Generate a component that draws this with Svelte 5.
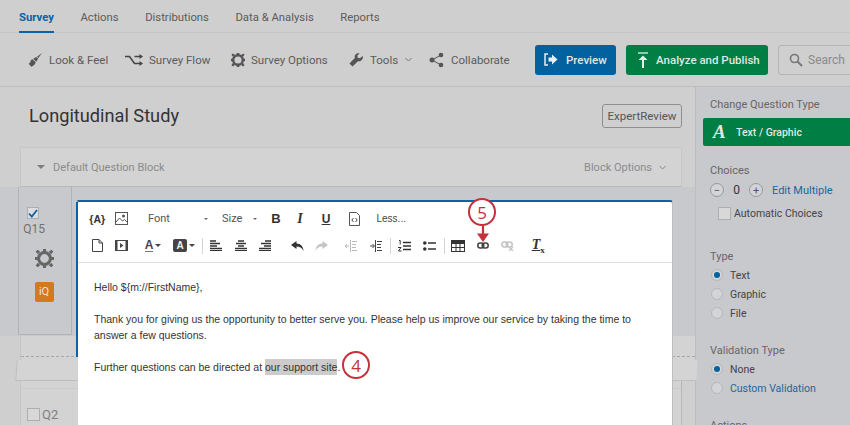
<script>
	const tabs = ['Survey', 'Actions', 'Distributions', 'Data & Analysis', 'Reports'];
</script>

<div class="page">
	<nav class="tabs">
		{#each tabs as tab, i}
			<span class="tab" class:active={i === 0}>{tab}</span>
		{/each}
	</nav>

	<div class="toolbar">
		<span class="tool t1">
			<svg width="15" height="15" viewBox="0 0 16 16"><path d="M15 1 9.500 5 11 6.500zM8.700 5.200 5.600 7.200 8.800 10.400 10.800 7.300zM4.800 7.800C3.500 8 3 9 2.600 10.400 2.300 11.500 1.600 12 .6 12.300L3.400 15.600C6 15 7.600 13.300 8.200 11z" fill="#555"/></svg>
			Look &amp; Feel
		</span>
		<span class="tool t2">
			<svg width="18" height="12" viewBox="0 0 18 12"><path d="M0 2.500h4.500L9.500 9.500H15M9.500 2.500H15" fill="none" stroke="#444" stroke-width="1.600"/><path d="M14.500 0 18 2.500 14.500 5zM14.500 7 18 9.500 14.500 12z" fill="#444"/></svg>
			Survey Flow
		</span>
		<span class="tool t3">
			<svg width="14" height="14" viewBox="0 0 16 16"><path d="M8 2.500a5.500 5.500 0 1 0 0 11 5.500 5.500 0 0 0 0-11z" fill="none" stroke="#555" stroke-width="2.800"/><path d="M6.500 0h3v3h-3zM6.500 13h3v3h-3zM0 6.500h3v3H0zM13 6.500h3v3h-3zM2 .5 4.500 2 2.500 4.500 .5 2zM14 11.500 15.500 14 13.500 15.500 11.500 13.500zM14 .5 15.500 2 13.500 4.500 11.500 2.500zM2 11.500 4.500 13.500 2.500 15.500 .5 14z" fill="#555"/></svg>
			Survey Options
		</span>
		<span class="tool t4">
			<svg width="14" height="14" viewBox="0 0 16 16"><path d="M11 0a4.500 4.500 0 0 0-4.300 5.800L.5 12l3.500 3.500 6.200-6.200A4.500 4.500 0 0 0 15.600 3.500L12.500 6 10 5.500 9.500 3 12 .2A4.500 4.500 0 0 0 11 0z" fill="#555"/></svg>
			Tools
			<svg class="chev" width="7" height="5" viewBox="0 0 7 5"><path d="M.5 1 3.500 4 6.500 1" fill="none" stroke="#777"/></svg>
		</span>
		<span class="tool t5">
			<svg width="15" height="16" viewBox="0 0 15 16"><path d="M3 8 12 3M3 8l9 5" stroke="#555"/><circle cx="3" cy="8" r="2.500" fill="#555"/><circle cx="12" cy="3" r="2.300" fill="#555"/><circle cx="12" cy="13" r="2.300" fill="#555"/></svg>
			Collaborate
		</span>
		<button class="btn preview">
			<svg width="14" height="13" viewBox="0 0 14 13"><path d="M4 1H1v11h3" fill="none" stroke="#e6eef4" stroke-width="1.500"/><path d="M4.500 4.500H8V1.500L13.500 6.500 8 11.500V8.500H4.500z" fill="#e6eef4"/></svg>
			Preview
		</button>
		<button class="btn publish">
			<svg width="12" height="16" viewBox="0 0 12 16"><path d="M1 1h10" stroke="#e6eee9" stroke-width="1.300"/><path d="M6 3.500 10.500 8H7v8H5V8H1.500z" fill="#e6eee9"/></svg>
			Analyze and Publish
		</button>
		<div class="search">
			<svg width="14" height="14" viewBox="0 0 14 14"><circle cx="5.500" cy="5.500" r="4" fill="none" stroke="#777" stroke-width="1.600"/><path d="M8.500 8.500 13 13" stroke="#777" stroke-width="2"/></svg>
			Search
		</div>
	</div>

	<div class="body">
		<main class="main">
			<div class="title-row">
				<h1>Longitudinal Study</h1>
				<button class="expert">ExpertReview</button>
			</div>

			<div class="block-head">
				<span class="caret"></span>
				<span>Default Question Block</span>
				<span class="block-opts">
					Block Options
					<svg width="7" height="5" viewBox="0 0 7 5"><path d="M.5 1 3.500 4 6.500 1" fill="none" stroke="#888"/></svg>
				</span>
			</div>

			<section class="question">
				<div class="q-side">
					<span class="check">
						<svg width="10" height="9" viewBox="0 0 10 9"><path d="M1 4.500 3.800 7.500 9 1" fill="none" stroke="#0b62a4" stroke-width="1.800"/></svg>
					</span>
					<span class="q-num">Q15</span>
					<svg class="q-gear" width="19" height="19" viewBox="0 0 16 16"><path d="M8 3a5 5 0 1 0 0 10A5 5 0 0 0 8 3z" fill="none" stroke="#666" stroke-width="2.600"/><path d="M6.700 0h2.600v3H6.700zM6.700 13h2.600v3H6.700zM0 6.700h3v2.600H0zM13 6.700h3v2.600h-3zM2.200 .6 4.500 2.300 2.300 4.500 .6 2.200zM13.800 11.500 15.400 13.800 13.800 15.400 11.500 13.700zM13.800 .6 15.400 2.200 13.700 4.500 11.500 2.300zM2.300 11.500 4.500 13.700 2.200 15.400 .6 13.800z" fill="#666"/></svg>
					<span class="iq">iQ</span>
				</div>
			</section>

			<div class="gap-zone">
				<div class="dashes"></div>
				<div class="break-tab"></div>
			</div>

			<section class="next-block">
				<div class="next-top"></div>
				<div class="q2"><span class="box"></span>Q2</div>
			</section>

			<div class="editor">
				<div class="ed-bar">
					<div class="ed-row">
						<span class="cell brace">&#123;A&#125;</span>
						<span class="cell">
							<svg width="13" height="13" viewBox="0 0 13 13"><rect x=".5" y=".5" width="12" height="12" fill="none" stroke="#555"/><circle cx="8.500" cy="4" r="1.500" fill="#555"/><path d="M1 10 4.500 6 7.500 9 9.500 7.500 12 10" fill="none" stroke="#555"/></svg>
						</span>
						<span class="select font">Font</span>
						<span class="mini-caret"></span>
						<span class="select size">Size</span>
						<span class="mini-caret"></span>
						<span class="fmt b">B</span>
						<span class="fmt i">I</span>
						<span class="fmt u">U</span>
						<span class="cell src">
							<svg width="11" height="14" viewBox="0 0 11 14"><path d="M.5.5h7l3 3v10H.5z" fill="none" stroke="#555"/><path d="M4.500 6 2.800 8 4.500 10M6.500 6 8.200 8 6.500 10" fill="none" stroke="#444"/></svg>
						</span>
						<span class="less">Less...</span>
					</div>
					<div class="ed-row">
						<span class="cell">
							<svg width="11" height="13" viewBox="0 0 11 13"><path d="M.5.5h6.500l3.500 3.500v8.500H.5zM7 .5V4h3.500" fill="none" stroke="#444"/></svg>
						</span>
						<span class="cell">
							<svg width="13" height="11" viewBox="0 0 13 11"><rect x=".5" y=".5" width="12" height="10" fill="none" stroke="#444"/><path d="M0 0h2.500v11H0zM10.500 0H13v11h-2.500zM5 3l3.500 2.500L5 8z" fill="#444"/></svg>
						</span>
						<span class="color c1">
							<span class="a-under">A</span><span class="mini-caret dark"></span>
						</span>
						<span class="color c2">
							<span class="a-box">A</span><span class="mini-caret dark"></span>
						</span>
						<span class="sep s1"></span>
						<span class="cell a1">
							<svg width="12" height="11" viewBox="0 0 12 11"><path d="M0 1h6M0 3.500h10M0 6h7M0 8.500h12" stroke="#333" stroke-width="1.300"/><path d="M0 10.500h12" stroke="#333"/></svg>
						</span>
						<span class="cell">
							<svg width="12" height="11" viewBox="0 0 12 11"><path d="M3 1h6M1 3.500h10M3 6h6M0 8.500h12" stroke="#333" stroke-width="1.300"/><path d="M0 10.500h12" stroke="#333"/></svg>
						</span>
						<span class="cell">
							<svg width="12" height="11" viewBox="0 0 12 11"><path d="M6 1h6M2 3.500h10M5 6h7M0 8.500h12" stroke="#333" stroke-width="1.300"/><path d="M0 10.500h12" stroke="#333"/></svg>
						</span>
						<span class="cell undo">
							<svg width="13" height="10" viewBox="0 0 13 10"><path d="M5.500 0 0 4l5.500 4V5.500C8.500 5.500 11 6.500 12.500 10 12.500 5.500 9.500 2.500 5.500 2.500z" fill="#333"/></svg>
						</span>
						<span class="cell">
							<svg width="13" height="10" viewBox="0 0 13 10"><path d="M7.500 0 13 4 7.500 8V5.500C4.500 5.500 2 6.500 .5 10 .5 5.500 3.500 2.500 7.500 2.500z" fill="#c4c4c4"/></svg>
						</span>
						<span class="cell outdent">
							<svg width="12" height="12" viewBox="0 0 12 12"><path d="M5.500 0v12" stroke="#bbb"/><path d="M0 6h4M2 4 0 6l2 2M7 1.500h5M7 4.500h4M7 7.500h4M7 10.500h5" fill="none" stroke="#bbb"/></svg>
						</span>
						<span class="cell">
							<svg width="12" height="12" viewBox="0 0 12 12"><path d="M5.500 0v12" stroke="#444"/><path d="M0 6h4M2.500 4 4.500 6l-2 2M7 1.500h5M7 4.500h4M7 7.500h4M7 10.500h5" fill="none" stroke="#444"/></svg>
						</span>
						<span class="sep s2"></span>
						<span class="cell ol">
							<svg width="13" height="12" viewBox="0 0 13 12"><path d="M5 2.500h8M5 6h8M5 9.500h8" stroke="#333" stroke-width="1.500"/><path d="M1 .5h1.200v4M0 7.500h3L.5 11h3" fill="none" stroke="#333"/></svg>
						</span>
						<span class="cell">
							<svg width="13" height="10" viewBox="0 0 13 10"><circle cx="1.800" cy="2" r="1.800" fill="#333"/><circle cx="1.800" cy="8" r="1.800" fill="#333"/><path d="M5 2h8M5 8h8" stroke="#333" stroke-width="1.600"/></svg>
						</span>
						<span class="sep s3"></span>
						<span class="cell tbl">
							<svg width="14" height="12" viewBox="0 0 14 12"><path d="M0 0h14v12H0z" fill="#333"/><path d="M1 4h3.500v3H1zM5.500 4h3v3h-3zM9.500 4H13v3H9.500zM1 8h3.500v3H1zM5.500 8h3v3h-3zM9.500 8H13v3H9.500z" fill="#fff"/></svg>
						</span>
						<span class="cell">
							<svg width="12" height="7" viewBox="0 0 12 7"><rect x=".8" y="1" width="6" height="5" rx="2.500" fill="none" stroke="#444" stroke-width="1.500"/><rect x="5.200" y="1" width="6" height="5" rx="2.500" fill="none" stroke="#444" stroke-width="1.500"/></svg>
						</span>
						<span class="cell">
							<svg width="13" height="10" viewBox="0 0 13 10"><rect x=".8" y="1" width="6" height="5" rx="2.500" fill="none" stroke="#c4c4c4" stroke-width="1.500"/><rect x="5.200" y="1" width="6" height="5" rx="2.500" fill="none" stroke="#c4c4c4" stroke-width="1.500"/><path d="M8 6l4 4M12 6l-4 4" stroke="#c4c4c4" stroke-width="1.300"/></svg>
						</span>
						<span class="clear"><u>T</u><sub>x</sub></span>
					</div>
				</div>
				<div class="ed-text">
					<p>Hello $&#123;m://FirstName&#125;,</p>
					<p>Thank you for giving us the opportunity to better serve you. Please help us improve our service by taking the time to answer a few questions.</p>
					<p>Further questions can be directed at <mark>our support site</mark>.</p>
				</div>
			</div>
		</main>

		<aside class="side">
			<h4>Change Question Type</h4>
			<div class="type-btn"><span class="big-a">A</span>Text / Graphic</div>

			<h4 class="choices">Choices</h4>
			<div class="stepper">
				<span class="round">&minus;</span>
				<span class="count">0</span>
				<span class="round">+</span>
				<span class="link">Edit Multiple</span>
			</div>
			<div class="auto"><span class="box"></span>Automatic Choices</div>

			<h4 class="type">Type</h4>
			<div class="radio on">Text</div>
			<div class="radio">Graphic</div>
			<div class="radio">File</div>

			<h4 class="valid">Validation Type</h4>
			<div class="radio on">None</div>
			<div class="radio link">Custom Validation</div>

			<h4 class="actions">Actions</h4>
		</aside>
	</div>

	<span class="marker m5">5</span>
	<svg class="arrow" width="12" height="17" viewBox="0 0 12 17"><path d="M6 0v10" stroke="#c4313b" stroke-width="2.200"/><path d="M0 7.500h12L6 16z" fill="#c4313b"/></svg>
	<span class="marker m4">4</span>
</div>

<style>
	:global(body) {
		margin: 0;
		overflow: hidden;
	}
	.page {
		position: relative;
		width: 850px;
		height: 425px;
		overflow: hidden;
		background: #cfcfcf;
		font-family: Roboto, "Liberation Sans", sans-serif;
		font-size: 12px;
		color: #555;
	}
	.tabs {
		display: flex;
		gap: 26.500px;
		height: 32px;
		padding-left: 19px;
		border-bottom: 1px solid #c6c6c6;
	}
	.tab {
		line-height: 36px;
		font-size: 11.300px;
		color: #5b5b5b;
	}
	.tab.active {
		color: #0b62a4;
		font-weight: 700;
		border-bottom: 2px solid #0b62a4;
		height: 31px;
	}
	.toolbar {
		display: flex;
		align-items: center;
		height: 53px;
		border-bottom: 1px solid #bcbcbc;
	}
	.tool {
		display: flex;
		flex: none;
		align-items: center;
		gap: 6px;
		font-size: 11.500px;
		color: #5b5b5b;
		white-space: nowrap;
	}
	.t1 { margin-left: 28px; width: 97px; }
	.t2 { width: 106px; }
	.t3 { width: 118px; }
	.t4 { width: 80px; }
	.t4 svg:first-child { margin-right: 1px; }
	.t5 { width: 106px; }
	.t5 svg { margin-right: 1px; }
	.chev { margin-left: 1px; }
	.btn {
		display: flex;
		flex: none;
		align-items: center;
		height: 30px;
		border: none;
		border-radius: 3px;
		padding: 0;
		font: 500 11.500px Roboto, sans-serif;
		color: #dfe8e6;
		white-space: nowrap;
	}
	.preview {
		width: 81px;
		background: #02629f;
		gap: 8px;
		padding-left: 9px;
		margin-right: 10px;
	}
	.publish {
		width: 142px;
		background: #007e43;
		gap: 7px;
		padding-left: 11px;
		margin-right: 10px;
	}
	.search {
		display: flex;
		align-items: center;
		gap: 5px;
		width: 80px;
		height: 28px;
		padding-left: 10px;
		border: 1px solid #b5b5b5;
		border-radius: 3px;
		color: #8a8a8a;
		flex: none;
	}

	.body {
		display: flex;
		height: 338px;
	}
	.main {
		position: relative;
		width: 695px;
		flex: none;
		border-right: 1px solid #bebebe;
	}
	.title-row {
		display: flex;
		align-items: center;
		justify-content: space-between;
		height: 60px;
		padding: 0 13px 0 29px;
	}
	h1 {
		margin: -4px 0 0;
		font-size: 18.200px;
		font-weight: 400;
		color: #333;
	}
	.expert {
		width: 80px;
		height: 24px;
		margin-top: -2px;
		padding: 0;
		background: none;
		border: 1px solid #8f8f8f;
		border-radius: 3px;
		font: 400 11.500px Roboto, sans-serif;
		color: #555;
	}
	.block-head {
		display: flex;
		align-items: center;
		height: 38px;
		margin: 0 13px 0 20px;
		padding: 0 15px 0 16px;
		background: #d3d3d3;
		border: 1px solid #c6c6c6;
		border-bottom-color: #b9b9b9;
		border-radius: 2px 2px 0 0;
		color: #8b8b8b;
		font-size: 11px;
	}
	.caret {
		width: 0;
		height: 0;
		margin-right: 8px;
		border: 4px solid transparent;
		border-top: 4px solid #7d7d7d;
		border-bottom: 0;
	}
	.block-opts {
		display: flex;
		align-items: center;
		gap: 7px;
		margin-left: auto;
	}
	.question {
		height: 149px;
		background: #c8c9cd;
		padding-left: 18px;
	}
	.q-side {
		display: flex;
		flex-direction: column;
		align-items: center;
		width: 54px;
		height: 148px;
		background: #c8c9cd;
		border: 1px solid #b3b3b3;
		border-top: none;
		box-sizing: border-box;
		padding-top: 20px;
	}
	.check {
		display: flex;
		align-items: center;
		justify-content: center;
		width: 12px;
		height: 12px;
		box-sizing: border-box;
		background: #dcdde0;
		border: 1px solid #aeaeae;
		margin-left: -24px;
	}
	.q-num {
		margin: 3px 0 0 -22px;
		color: #707070;
		font-size: 12px;
	}
	.q-gear {
		margin: 13px 0 0 -2px;
	}
	.iq {
		width: 19px;
		height: 20px;
		margin: 14px 0 0 -2px;
		background: #d37a1e;
		border-radius: 2px;
		color: #f3e3cf;
		text-align: center;
		line-height: 20px;
		font-size: 11px;
	}
	.gap-zone {
		position: relative;
		height: 45px;
		margin-left: 20px;
		background: #d3d3d3;
		border-left: 1px solid #c6c6c6;
	}
	.dashes {
		height: 20px;
		border-bottom: 1px dashed #a8a8a8;
	}
	.break-tab {
		position: absolute;
		left: -5px;
		top: 24px;
		width: 680px;
		height: 20px;
		background: #d4d4d4;
		border-bottom: 1px solid #bebebe;
		border-left: 1px solid #bfbfbf;
		transform: skewX(-4deg);
	}
	.next-block {
		height: 46px;
		margin: 0 13px 0 20px;
		background: #d3d3d3;
		border-left: 1px solid #c6c6c6;
		border-right: 1px solid #b8b8b8;
	}
	.next-top {
		height: 7px;
		border-bottom: 1px solid #cbcbcb;
	}
	.q2 {
		display: flex;
		align-items: center;
		gap: 2px;
		padding: 18px 0 0 6px;
		font-size: 13px;
		color: #808080;
	}
	.box {
		display: inline-block;
		width: 11px;
		height: 11px;
		border: 1px solid #aeaeae;
		background: #d8d8d8;
		flex: none;
	}
	.editor {
		position: absolute;
		left: 76px;
		top: 113px;
		width: 597px;
		height: 240px;
		background: #fff;
		background-clip: padding-box;
		box-sizing: border-box;
		border-top: 2px solid #0b62a4;
		border-left: 2px solid transparent;
		border-right: 1px solid #bdbdbd;
		border-radius: 3px 3px 0 0;
	}
	.editor::before {
		content: "";
		position: absolute;
		left: -2px;
		top: 0;
		width: 2px;
		height: 155px;
		background: #0b62a4;
	}
	.ed-bar {
		height: 61px;
		padding-top: 3px;
		box-sizing: border-box;
		border-bottom: 1px solid #dedede;
	}
	.ed-row {
		position: relative;
		display: flex;
		align-items: center;
		height: 27px;
		padding-left: 7px;
	}
	.cell {
		display: flex;
		align-items: center;
		justify-content: center;
		width: 24.500px;
		flex: none;
	}
	.brace {
		font: 700 10.500px "Liberation Sans", sans-serif;
		color: #333;
	}
	.select {
		font-size: 11px;
		color: #555;
	}
	.font { margin-left: 14px; width: 56px; }
	.size { margin-left: 14px; width: 31px; }
	.mini-caret {
		flex: none;
		width: 0;
		height: 0;
		border: 2px solid transparent;
		border-top: 2px solid #666;
		border-bottom: 0;
	}
	.mini-caret.dark {
		margin-left: 2px;
		border-width: 3px;
		border-bottom: 0;
		border-top-color: #444;
	}
	.fmt {
		flex: none;
		width: 24px;
		text-align: center;
		font: 700 13px "Liberation Sans", sans-serif;
		color: #333;
	}
	.b { margin-left: 7px; }
	.i { font-family: "Liberation Serif", serif; font-style: italic; font-size: 14px; }
	.u { text-decoration: underline; margin-left: 2px; font-size: 12px; }
	.src { margin-left: 4px; }
	.less {
		margin-left: 10px;
		font: 10px "Liberation Sans", sans-serif;
		color: #444;
	}
	.color {
		flex: none;
		display: flex;
		align-items: center;
		justify-content: center;
		width: 31px;
	}
	.c1 { margin-left: 3.500px; }
	.a-under {
		display: block;
		font: 700 12px/12px "Liberation Sans", sans-serif;
		color: #444;
		border-bottom: 1.500px solid #777;
	}
	.a-box {
		width: 14px;
		height: 13px;
		background: #444;
		border-radius: 2px;
		color: #eee;
		text-align: center;
		font: 700 10px/13px "Liberation Sans", sans-serif;
	}
	.sep {
		flex: none;
		width: 1px;
		height: 16px;
		background: #d4d4d4;
	}
	.s1 { margin-left: 2.500px; }
	.a1 { margin-left: 1px; }
	.undo { margin-left: 7.250px; }
	.outdent { margin-left: 5px; }
	.s2 { margin-left: 2px; }
	.ol { margin-left: 1.500px; }
	.s3 { margin-left: 2.500px; }
	.tbl { margin-left: 1px; }
	.clear {
		margin-left: 12.500px;
		font: italic 700 14px "Liberation Serif", serif;
		color: #333;
	}
	.clear sub {
		font-size: 9px;
		font-style: normal;
	}
	.ed-text {
		padding: 16px 28px 0 16px;
		font: 10.500px/16px "Liberation Sans", sans-serif;
		color: #333;
	}
	.ed-text p {
		margin: 0 0 16px;
	}
	mark {
		padding: 2px 0;
		background: #cdcbcb;
		color: #333;
	}

	.side {
		flex: 1;
		padding: 11px 0 0 14px;
		background: #c8c9cd;
		color: #444;
		font-size: 10.500px;
	}
	h4 {
		margin: 0;
		font-size: 11px;
		line-height: 14px;
		font-weight: 400;
		color: #666;
	}
	.type-btn {
		display: flex;
		align-items: center;
		height: 28px;
		margin: 6px 0 0 -7px;
		padding-left: 10px;
		background: #007e43;
		border-radius: 2px 0 0 2px;
		color: #dfe8e6;
		font-weight: 500;
		font-size: 10.500px;
	}
	.big-a {
		width: 23px;
		font: italic 700 19px "Liberation Serif", serif;
	}
	.choices { margin-top: 18px; }
	.stepper {
		display: flex;
		align-items: center;
		height: 18px;
		margin-top: 3px;
	}
	.round {
		display: flex;
		align-items: center;
		justify-content: center;
		width: 12px;
		height: 12px;
		border: 1px solid #999;
		border-radius: 50%;
		background: #d3d4d7;
		font-size: 11px;
		line-height: 1;
		color: #555;
	}
	.count { width: 25px; text-align: center; font-size: 12px; color: #333; }
	.link { color: #1d659f; }
	.stepper .link { margin-left: 9px; font-size: 11px; }
	.auto {
		display: flex;
		align-items: center;
		gap: 3px;
		margin: 7px 0 0 8px;
		height: 14px;
	}
	.type { margin-top: 30px; }
	.radio {
		position: relative;
		height: 19px;
		line-height: 19px;
		padding-left: 20px;
	}
	.type + .radio { margin-top: 2px; }
	.radio::before {
		content: "";
		position: absolute;
		left: 1px;
		top: 3px;
		width: 10px;
		height: 10px;
		border: 1px solid #b7b7b7;
		border-radius: 50%;
		background: #d3d4d7;
	}
	.radio.on::after {
		content: "";
		position: absolute;
		left: 4px;
		top: 6px;
		width: 6px;
		height: 6px;
		border-radius: 50%;
		background: #02629f;
	}
	.valid { margin-top: 21px; }
	.valid + .radio { margin-top: 2px; }
	.actions { margin-top: 21px; }

	.marker {
		position: absolute;
		display: flex;
		align-items: center;
		justify-content: center;
		width: 24px;
		height: 24px;
		border: 2.500px solid #c4313b;
		border-radius: 50%;
		background: #fff;
		color: #c4313b;
		font: 17px "Open Sans", sans-serif;
	}
	.m5 { left: 468px; top: 198px; }
	.m4 { left: 342px; top: 351px; }
	.arrow { position: absolute; left: 477px; top: 226px; }
</style>
